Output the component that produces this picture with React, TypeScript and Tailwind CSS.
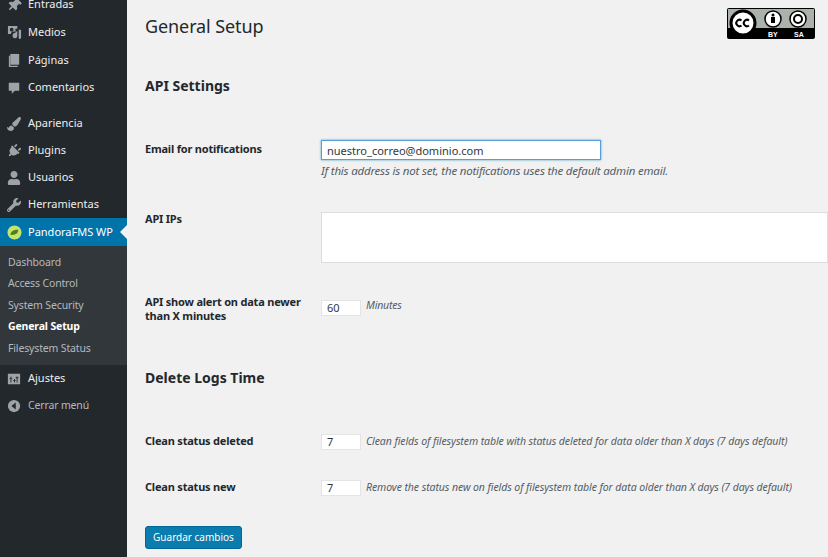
import type { ReactNode } from 'react';
import { FaPaintBrush, FaPlug, FaThumbtack, FaUser, FaWrench } from 'react-icons/fa';

const font = 'font-["Noto_Sans",sans-serif]';

function MediaIcon() {
  return (
    <svg viewBox="0 0 16 16" className="w-[15px] h-[15px]" fill="#9ea3a8">
      <path fillRule="evenodd" d="M1 1h10v3H9v3H6.500A3 3 0 0 0 4 9.500H1zM5 3a2 2 0 1 0 0 4 2 2 0 0 0 0-4z" />
      <path d="M6 11a2.500 2.500 0 0 1 3-2.400V7h2v5a2.500 2.500 0 0 1-5-1z" />
      <path d="M12.500 5H15v8.500a1.500 1.500 0 0 1-2.500 1z" />
    </svg>
  );
}

function PageIcon() {
  return (
    <svg viewBox="0 0 16 16" className="w-[15px] h-[15px]" fill="#9ea3a8">
      <path d="M3.500 1H13v11.500H3.500z" />
      <path d="M2 3v12h9.500v-1.500H3.500V3z" />
    </svg>
  );
}

function CommentIcon() {
  return (
    <svg viewBox="0 0 16 16" className="w-[14px] h-[14px]" fill="#9ea3a8">
      <path d="M2 2h12v9H9l-3.500 3.500V11H2z" />
    </svg>
  );
}

function SettingsIcon() {
  return (
    <svg viewBox="0 0 16 16" className="w-[14px] h-[14px]" fill="#9ea3a8">
      <path fillRule="evenodd" d="M1 2h14v12H1zM4 5v2H3v1h1v4h1V8h1V7H5V5zm4 3v1H7v1h1v2h1v-2h1V9H9V8zm3-3v1h-1v1h1v5h1V7h1V6h-1V5z" />
    </svg>
  );
}

function CollapseIcon() {
  return (
    <svg viewBox="0 0 16 16" className="w-[14px] h-[14px]">
      <circle cx="8" cy="8" r="7" fill="#9ea3a8" />
      <path d="M10 4v8L5 8z" fill="#23282d" />
    </svg>
  );
}

function PandoraIcon() {
  return (
    <svg viewBox="0 0 16 16" className="w-[15px] h-[15px]">
      <circle cx="8" cy="8" r="7.500" fill="#c6e36b" />
      <path d="M3.500 10.500C4 7 7 4.500 12 5c0 3.500-2.500 6-8.500 5.500z" fill="#4f7f1a" />
    </svg>
  );
}

function MenuItem({ icon, label, className = '' }: { icon: ReactNode; label: string; className?: string }) {
  return (
    <div className={`flex items-center h-[27px] text-[11px] text-[#eeeeee] ${className}`}>
      <span className="w-[28px] flex justify-center shrink-0 text-[#9ea3a8] text-[14px]">{icon}</span>
      <span>{label}</span>
    </div>
  );
}

function Sidebar() {
  const submenu = ['Dashboard', 'Access Control', 'System Security', 'General Setup', 'Filesystem Status'];

  return (
    <aside className="w-[127px] shrink-0 bg-[#23282d] h-[557px] overflow-hidden">
      <div className="-mt-[9px]">
        <MenuItem icon={<FaThumbtack className="rotate-45" />} label="Entradas" />
        <MenuItem icon={<MediaIcon />} label="Medios" className="mt-px" />
        <MenuItem icon={<PageIcon />} label="Páginas" className="mt-px" />
        <MenuItem icon={<CommentIcon />} label="Comentarios" />
        <MenuItem icon={<FaPaintBrush />} label="Apariencia" className="mt-[9px]" />
        <MenuItem icon={<FaPlug className="rotate-45" />} label="Plugins" />
        <MenuItem icon={<FaUser />} label="Usuarios" />
        <MenuItem icon={<FaWrench />} label="Herramientas" />
        <div className="relative flex items-center h-[28px] bg-[#0073aa] text-[11px] text-white">
          <span className="w-[28px] flex justify-center shrink-0"><PandoraIcon /></span>
          <span>PandoraFMS WP</span>
          <span className="absolute right-0 top-[7px] border-y-[7px] border-r-[7px] border-y-transparent border-r-[#f1f1f1]" />
        </div>
        <div className="bg-[#32373c] h-[119px] pt-[6px] pl-[8px] text-[10.5px] tracking-[-0.15px] text-[#b4b9be]">
          {submenu.map((item) => (
            <div key={item} className={`h-[21.5px] flex items-center ${item === 'General Setup' ? 'font-bold text-white' : ''}`}>
              {item}
            </div>
          ))}
        </div>
        <MenuItem icon={<SettingsIcon />} label="Ajustes" />
        <div className="flex items-center h-[27px] text-[10.5px] tracking-[-0.15px] text-[#b4b9be]">
          <span className="w-[28px] flex justify-center shrink-0"><CollapseIcon /></span>
          <span>Cerrar menú</span>
        </div>
      </div>
    </aside>
  );
}

function CcBadge() {
  return (
    <div className="absolute right-[13px] top-[8px] w-[88px] h-[31px] bg-black rounded-[2px] p-px">
      <svg viewBox="0 0 86 29" className="w-full h-full block">
        <rect x="0" y="0" width="86" height="19" fill="#aab2ab" />
        <circle cx="15" cy="14" r="12" fill="#fff" stroke="#000" strokeWidth="3" />
        <path d="M13.500 11.500a3.200 3.200 0 1 0 0 5M21 11.500a3.200 3.200 0 1 0 0 5" fill="none" stroke="#000" strokeWidth="2" />
        <circle cx="45" cy="10" r="8" fill="#fff" stroke="#000" strokeWidth="1.500" />
        <circle cx="45" cy="6" r="1.500" fill="#000" />
        <rect x="43" y="8" width="4" height="6" fill="#000" />
        <circle cx="70" cy="10" r="8" fill="#fff" stroke="#000" strokeWidth="1.500" />
        <circle cx="70" cy="10" r="4" fill="none" stroke="#000" strokeWidth="2" />
      </svg>
      <span className="absolute left-[41px] bottom-[0px] text-[7px] leading-[9px] font-bold text-white font-['Liberation_Sans',sans-serif]">BY</span>
      <span className="absolute left-[67px] bottom-[0px] text-[7px] leading-[9px] font-bold text-white font-['Liberation_Sans',sans-serif]">SA</span>
    </div>
  );
}

function Label({ children, className = '' }: { children: ReactNode; className?: string }) {
  return <div className={`w-[176px] shrink-0 text-[11px] leading-[14px] tracking-[-0.2px] font-bold text-[#23282d] ${className}`}>{children}</div>;
}

function SmallInput({ value }: { value: string }) {
  return (
    <input
      readOnly
      value={value}
      className="w-[40px] h-[16px] bg-white border border-[#e4e4e4] pl-[5px] text-[11px] text-[#32373c] outline-none"
    />
  );
}

function Hint({ children, className = '' }: { children: ReactNode; className?: string }) {
  return <span className={`text-[10.5px] italic text-[#555d66] whitespace-nowrap ${className}`}>{children}</span>;
}

export default function App() {
  return (
    <div className={`relative flex w-[828px] h-[557px] overflow-hidden bg-[#f1f1f1] ${font}`}>
      <Sidebar />
      <main className="flex-1 pl-[18px] min-w-0">
        <h1 className="mt-[13px] text-[18px] leading-[27px] tracking-[-0.1px] text-[#23282d]">General Setup</h1>
        <CcBadge />
        <h2 className="mt-[36px] text-[14px] leading-[20px] font-bold text-[#23282d]">API Settings</h2>

        <div className="flex mt-[44px]">
          <Label className="pt-[2px]">Email for notifications</Label>
          <div>
            <input
              readOnly
              value="nuestro_correo@dominio.com"
              className="block w-[280px] h-[20px] bg-white border border-[#5b9dd9] shadow-[0_0_2px_rgba(30,140,190,0.8)] px-[5px] text-[11px] text-[#32373c] outline-none"
            />
            <div className="mt-[2px] leading-[14px]">
              <Hint className="text-[11.5px] tracking-[-0.2px]">If this address is not set, the notifications uses the default admin email.</Hint>
            </div>
          </div>
        </div>

        <div className="flex mt-[34px]">
          <Label>API IPs</Label>
          <div className="w-[520px] h-[51px] bg-white border border-[#dddddd]" />
        </div>

        <div className="flex mt-[32px]">
          <Label>API show alert on data newer than X minutes</Label>
          <div className="flex items-start gap-[5px] mt-[5px]">
            <SmallInput value="60" />
            <Hint className="-mt-[2px] tracking-[-0.2px]">Minutes</Hint>
          </div>
        </div>

        <h2 className="mt-[45px] text-[14px] leading-[20px] font-bold text-[#23282d]">Delete Logs Time</h2>

        <div className="flex mt-[46px]">
          <Label>Clean status deleted</Label>
          <div className="flex items-center gap-[5px]">
            <SmallInput value="7" />
            <Hint className="tracking-[-0.08px]">Clean fields of filesystem table with status deleted for data older than X days (7 days default)</Hint>
          </div>
        </div>

        <div className="flex mt-[30px]">
          <Label>Clean status new</Label>
          <div className="flex items-center gap-[5px]">
            <SmallInput value="7" />
            <Hint className="tracking-[-0.08px]">Remove the status new on fields of filesystem table for data older than X days (7 days default)</Hint>
          </div>
        </div>

        <button className="mt-[30px] w-[97px] h-[23px] bg-[#0a7cad] border border-[#006799] rounded-[3px] text-[10px] text-white">
          Guardar cambios
        </button>
      </main>
    </div>
  );
}
